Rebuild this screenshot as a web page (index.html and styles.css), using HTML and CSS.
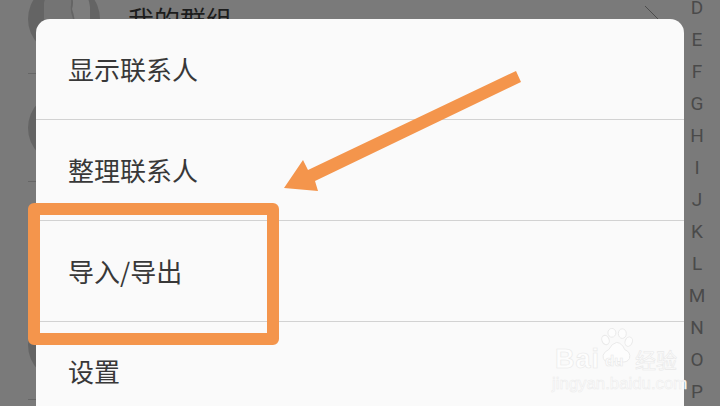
FILE: index.html
```html
<!DOCTYPE html>
<html lang="zh-CN">
<head>
<meta charset="utf-8">
<title>联系人</title>
<link rel="stylesheet" href="styles.css">
</head>
<body>
<div class="screen">
  <div class="list">
    <div class="row row-first">
      <svg class="avatar" viewBox="0 0 72 72"><circle cx="36" cy="36" r="36" fill="#646464"/><path d="M16 62 V20 Q20 2 40 1 Q44 14 43 22 Q42 28 45 36 L46 62Z" fill="#747474"/><path d="M45 4 Q60 6 62 24 L62 50 L48 50 Q47 34 44 26 Q46 20 44 14Z" fill="#7d7d7d"/></svg>
      <span class="row-title">我的群组</span>
      <svg class="chevron" viewBox="0 0 14 40"><polyline points="1,7 14,20 1,33" fill="none" stroke="#4d4d4d" stroke-width="1"/></svg>
    </div>
    <div class="row">
      <svg class="avatar" viewBox="0 0 72 72"><circle cx="36" cy="36" r="36" fill="#646464"/></svg>
    </div>
    <div class="row row-tall"></div>
    <div class="row row-tall">
      <svg class="avatar" viewBox="0 0 72 72"><circle cx="36" cy="36" r="36" fill="#646464"/></svg>
    </div>
  </div>

  <div class="index">
    <span>D</span><span>E</span><span>F</span><span>G</span><span>H</span><span>I</span><span>J</span><span>K</span><span>L</span><span>M</span><span>N</span><span>O</span><span>P</span>
  </div>

  <div class="menu">
    <div class="menu-item">显示联系人</div>
    <div class="menu-item">整理联系人</div>
    <div class="menu-item">导入/导出</div>
    <div class="menu-item">设置</div>
  </div>

  <svg class="arrow" viewBox="0 0 720 406"><polygon points="521,82 315,181 318,191 284,188 303,160 308,170 516,71" fill="#f4954c"/></svg>
  <div class="highlight"></div>

  <div class="watermark">
    <svg class="paw" viewBox="0 0 46 50">
      <g fill="#fdfdfd" stroke="#e9e9e9" stroke-width="1.2">
        <ellipse cx="8" cy="15" rx="4.5" ry="6" transform="rotate(-20 8 15)"/>
        <ellipse cx="16" cy="6" rx="5" ry="5.5"/>
        <ellipse cx="29" cy="7" rx="5" ry="6"/>
        <ellipse cx="37" cy="17" rx="4.5" ry="6" transform="rotate(20 37 17)"/>
        <path d="M22 18 Q29 19 32 27 Q40 30 38 38 Q35 44 27 42 Q21 41 15 43 Q4 43 5 34 Q7 29 12 27 Q16 19 22 18Z"/>
      </g>
    </svg>
    <div class="wm-top"><span class="wm-bai">Bai</span><span class="wm-du">du</span><span class="wm-jy">经验</span></div>
    <div class="wm-url">jingyan.baidu.com</div>
  </div>
</div>
</body>
</html>
```
FILE: styles.css
```css
* { box-sizing: border-box; }
html, body { margin: 0; padding: 0; }
body { background: #7a7a7a; }

.screen {
  position: relative;
  width: 720px;
  height: 406px;
  overflow: hidden;
  background: #7a7a7a;
  font-family: "Noto Sans CJK SC", "Noto Sans", sans-serif;
}

.list {
  display: flex;
  flex-direction: column;
  margin-top: -35px;
  margin-right: 40px;
  padding-left: 28px;
}
.row {
  display: flex;
  align-items: center;
  flex: none;
  height: 108px;
  border-bottom: 1px solid #666;
}
.row-first { height: 109px; }
.row-tall { height: 109px; }
.avatar { width: 72px; height: 72px; flex: none; }
.row-title {
  margin-left: 28px;
  font-size: 26px;
  line-height: 36px;
  color: #1c1c1c;
}
.chevron {
  width: 14px;
  height: 40px;
  margin-left: auto;
  margin-right: 22px;
  flex: none;
}

.index {
  position: absolute;
  top: -8px;
  right: 0;
  width: 48px;
  display: flex;
  flex-direction: column;
  align-items: flex-end;
  padding-right: 13px;
  font-family: Roboto, "Liberation Sans", sans-serif;
  font-size: 19px;
  line-height: 32px;
  color: #4a4a4a;
}
.index span { width: 20px; text-align: center; }

.menu {
  position: absolute;
  left: 36px;
  top: 19px;
  width: 648px;
  height: 420px;
  background: #fafafa;
  border-radius: 14px;
}
.menu-item {
  display: flex;
  align-items: center;
  height: 101px;
  padding-left: 32px;
  padding-bottom: 1px;
  border-bottom: 1px solid #d2d2d2;
  font-size: 26px;
  color: #383838;
}
.menu-item:last-child { border-bottom: 0; padding-bottom: 4px; }

.arrow {
  position: absolute;
  left: 0;
  top: 0;
  width: 720px;
  height: 406px;
}
.highlight {
  position: absolute;
  left: 28px;
  top: 203px;
  width: 251px;
  height: 142px;
  border: 12px solid #f4954c;
  border-radius: 6px;
}

.watermark {
  position: absolute;
  left: 552px;
  top: 330px;
  width: 128px;
  height: 62px;
  color: #fdfdfd;
  -webkit-text-stroke: 0.6px #e9e9e9;
}
.paw {
  position: absolute;
  left: 47px;
  top: -2px;
  width: 37px;
  height: 40px;
}
.wm-top {
  position: absolute;
  left: 0;
  top: 14px;
  height: 28px;
  width: 128px;
  font-family: "Liberation Sans", sans-serif;
}
.wm-bai {
  position: absolute;
  left: 3px;
  top: 0;
  font-size: 27px;
  font-weight: 700;
  line-height: 30px;
  letter-spacing: 1px;
}
.wm-du {
  position: absolute;
  left: 53px;
  top: 7px;
  font-size: 15px;
  font-weight: 700;
  line-height: 20px;
}
.wm-jy {
  position: absolute;
  left: 83px;
  top: 2px;
  font-family: "Noto Sans CJK SC", sans-serif;
  font-size: 21px;
  line-height: 26px;
}
.wm-url {
  position: absolute;
  left: 0;
  top: 44px;
  font-family: "Liberation Sans", sans-serif;
  font-size: 16.8px;
  line-height: 20px;
  white-space: nowrap;
  -webkit-text-stroke: 0.5px #ebebeb;
}
```
